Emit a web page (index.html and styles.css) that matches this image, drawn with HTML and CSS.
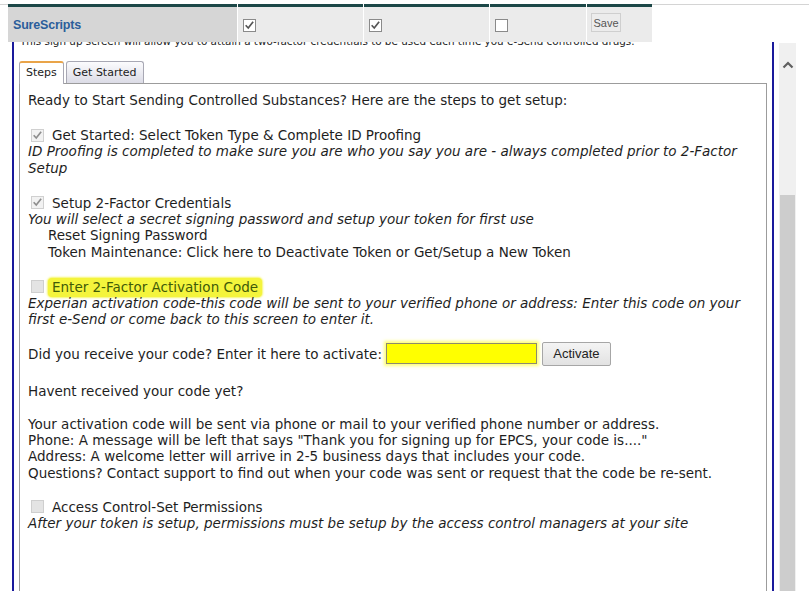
FILE: index.html
```html
<!DOCTYPE html>
<html>
<head>
<meta charset="utf-8">
<title>EPCS Setup</title>
<link rel="stylesheet" href="styles.css">
</head>
<body>
<div class="topline"></div>
<div class="header">
  <div class="hcell name">SureScripts</div>
  <div class="hcell c1"><span class="hcb"><svg viewBox="0 0 13 13" width="11" height="11"><path d="M2 6.2 L5 9.5 L10.8 2" fill="none" stroke="#555" stroke-width="2"/></svg></span></div>
  <div class="hcell c2"><span class="hcb"><svg viewBox="0 0 13 13" width="11" height="11"><path d="M2 6.2 L5 9.5 L10.8 2" fill="none" stroke="#555" stroke-width="2"/></svg></span></div>
  <div class="hcell c3"><span class="hcb"></span></div>
  <div class="hcell c4"><button class="save" type="button">Save</button></div>
</div>
<div class="page">
  <div class="frame">
    <div class="clipline">This sign up screen will allow you to attain a two-factor credentials to be used each time you e-Send controlled drugs.</div>
    <div class="tabs">
      <div class="tab active">Steps</div>
      <div class="tab">Get Started</div>
    </div>
    <div class="panel">
      <div class="line">Ready to Start Sending Controlled Substances? Here are the steps to get setup:</div>

      <div class="block">
        <div class="step"><span class="cb on"><svg viewBox="0 0 13 13" width="11" height="11"><path d="M2 6.2 L5 9.5 L10.8 2" fill="none" stroke="#8e8e8e" stroke-width="2"/></svg></span>Get Started: Select Token Type &amp; Complete ID Proofing</div>
        <div class="desc">ID Proofing is completed to make sure you are who you say you are - always completed prior to 2-Factor Setup</div>
      </div>

      <div class="block">
        <div class="step"><span class="cb on"><svg viewBox="0 0 13 13" width="11" height="11"><path d="M2 6.2 L5 9.5 L10.8 2" fill="none" stroke="#8e8e8e" stroke-width="2"/></svg></span>Setup 2-Factor Credentials</div>
        <div class="desc">You will select a secret signing password and setup your token for first use</div>
        <div class="sub">Reset Signing Password</div>
        <div class="sub">Token Maintenance: Click here to Deactivate Token or Get/Setup a New Token</div>
      </div>

      <div class="block">
        <div class="step"><span class="cb"></span><span class="hl">Enter 2-Factor Activation Code</span></div>
        <div class="desc">Experian activation code-this code will be sent to your verified phone or address: Enter this code on your first e-Send or come back to this screen to enter it.</div>
      </div>

      <div class="activate">Did you receive your code? Enter it here to activate:<span class="code"></span><button class="actbtn" type="button">Activate</button></div>

      <div class="block after-input">Havent received your code yet?</div>

      <div class="block info">
        <div class="line">Your activation code will be sent via phone or mail to your verified phone number or address.</div>
        <div class="line">Phone: A message will be left that says "Thank you for signing up for EPCS, your code is...."</div>
        <div class="line">Address: A welcome letter will arrive in 2-5 business days that includes your code.</div>
        <div class="line">Questions? Contact support to find out when your code was sent or request that the code be re-sent.</div>
      </div>

      <div class="block last">
        <div class="step"><span class="cb"></span>Access Control-Set Permissions</div>
        <div class="desc">After your token is setup, permissions must be setup by the access control managers at your site</div>
      </div>
    </div>
  </div>
  <div class="scrollbar">
    <div class="arrow"><svg viewBox="0 0 12 8" width="12" height="8"><path d="M1.5 6.5 L6 2 L10.5 6.5" fill="none" stroke="#606060" stroke-width="2.2"/></svg></div>
    <div class="thumb"></div>
  </div>
</div>
</body>
</html>
```
FILE: styles.css
```css
* { box-sizing: border-box; }
html, body { margin: 0; padding: 0; }
body {
  width: 809px;
  height: 591px;
  overflow: hidden;
  position: relative;
  background: #fff;
  font-family: "DejaVu Sans", Verdana, sans-serif;
  font-size: 13.5px;
  color: #1e1e1e;
}
.topline {
  position: absolute;
  top: 4px; left: 0; right: 0;
  height: 1px;
  background: #d4d4d4;
}
.header {
  position: absolute;
  top: 4px; left: 8px;
  width: 644px;
  height: 38px;
  display: flex;
  gap: 1px;
  background: #fff;
  z-index: 2;
}
.hcell {
  height: 38px;
  border-top: 3px solid #1c4747;
  background: #ebebeb;
}
.hcell.name {
  width: 229px;
  background: #d6d6d6;
  font: bold 12.5px "Liberation Sans", Arial, sans-serif;
  color: #2b5e9b;
  padding: 11px 0 0 5px;
  letter-spacing: -0.2px;
}
.hcell.c1, .hcell.c2 { width: 125px; padding: 12px 0 0 5px; }
.hcell.c3 { width: 96px; padding: 12px 0 0 5px; }
.hcell.c4 { width: 65px; padding: 6px 0 0 4px; }
.hcb {
  display: flex;
  align-items: center;
  justify-content: center;
  width: 13px; height: 13px;
  border: 1px solid #8a8a8a;
  background: #fff;
}
.save {
  display: block;
  width: 30px; height: 19px;
  padding: 0;
  font: 11px "Liberation Sans", Arial, sans-serif;
  color: #555;
  background: #ececec;
  border: 1px solid #cfcfcf;
}
.page {
  display: flex;
  padding-left: 12px;
}
.frame {
  width: 762px;
  height: 549px;
  margin-top: 42px;
  border-left: 2px solid #1a1a9c;
  border-right: 2px solid #1a1a9c;
  padding: 0 5px;
  overflow: hidden;
}
.clipline {
  margin: -7px 0 0 1px;
  font-size: 10.4px;
  line-height: 13px;
  white-space: nowrap;
}
.tabs {
  display: flex;
  gap: 2px;
  margin-top: 13px;
  font-size: 11px;
  position: relative;
  z-index: 1;
}
.tab {
  height: 22px;
  padding: 4px 6px 0 6px;
  border: 1px solid #a8a8b4;
  border-bottom: none;
  border-radius: 3px 3px 0 0;
  background: linear-gradient(#fbfbfd, #dcdce6);
  color: #222;
}
.tab.active {
  background: #fff;
  border-top: 2px solid #e9a449;
  padding-top: 3px;
  height: 23px;
  margin-bottom: -1px;
}
.panel {
  border: 1px solid #9c9c9c;
  height: 540px;
  padding: 8px 8px 0 8px;
  line-height: 16.3px;
}
.block { margin-top: 18.8px; }
.block.after-input { margin-top: 16.8px; }
.block.info { margin-top: 16.7px; }
.block.last { margin-top: 17.8px; }
.step {
  display: flex;
  align-items: center;
}
.cb {
  display: flex;
  align-items: center;
  justify-content: center;
  flex: none;
  width: 13px; height: 13px;
  margin: 0 8px 0 3px;
  border: 1px solid #cfcfcf;
  background: #e4e4e4;
}
.cb.on { background: #f2f2f2; border-color: #d0d0d0; }
.desc { font-style: italic; }
.sub { padding-left: 20px; }
.hl {
  background: #f4f43c;
  color: #3f5a08;
  margin: -1px 0 -2px -4px;
  padding: 1px 4px 2px 4px;
  border-radius: 4px;
  box-shadow: 0 0 2px 1px #f6f66a;
}
.activate {
  display: flex;
  align-items: center;
  height: 24px;
  margin-top: 14.3px;
}
.code {
  width: 151px;
  height: 21px;
  margin-left: 4px;
  background: #ffff00;
  border: 1px solid #8c8a70;
  box-shadow: 0 0 3px 2px rgba(255, 255, 60, 0.7);
}
.actbtn {
  width: 69px;
  height: 24px;
  margin-left: 5px;
  padding: 0;
  font: 13px "Liberation Sans", Arial, sans-serif;
  color: #222;
  background: linear-gradient(#f4f4f4, #e2e2e2);
  border: 1px solid #a6a6a6;
  border-radius: 2px;
}
.scrollbar {
  width: 17px;
  height: 548px;
  margin: 43px 0 0 5px;
  background: #f0f0f0;
}
.arrow {
  display: flex;
  justify-content: center;
  padding-top: 18px;
  height: 152px;
}
.thumb {
  width: 15px;
  height: 400px;
  margin-left: 1px;
  background: #cdcdcd;
}
```
